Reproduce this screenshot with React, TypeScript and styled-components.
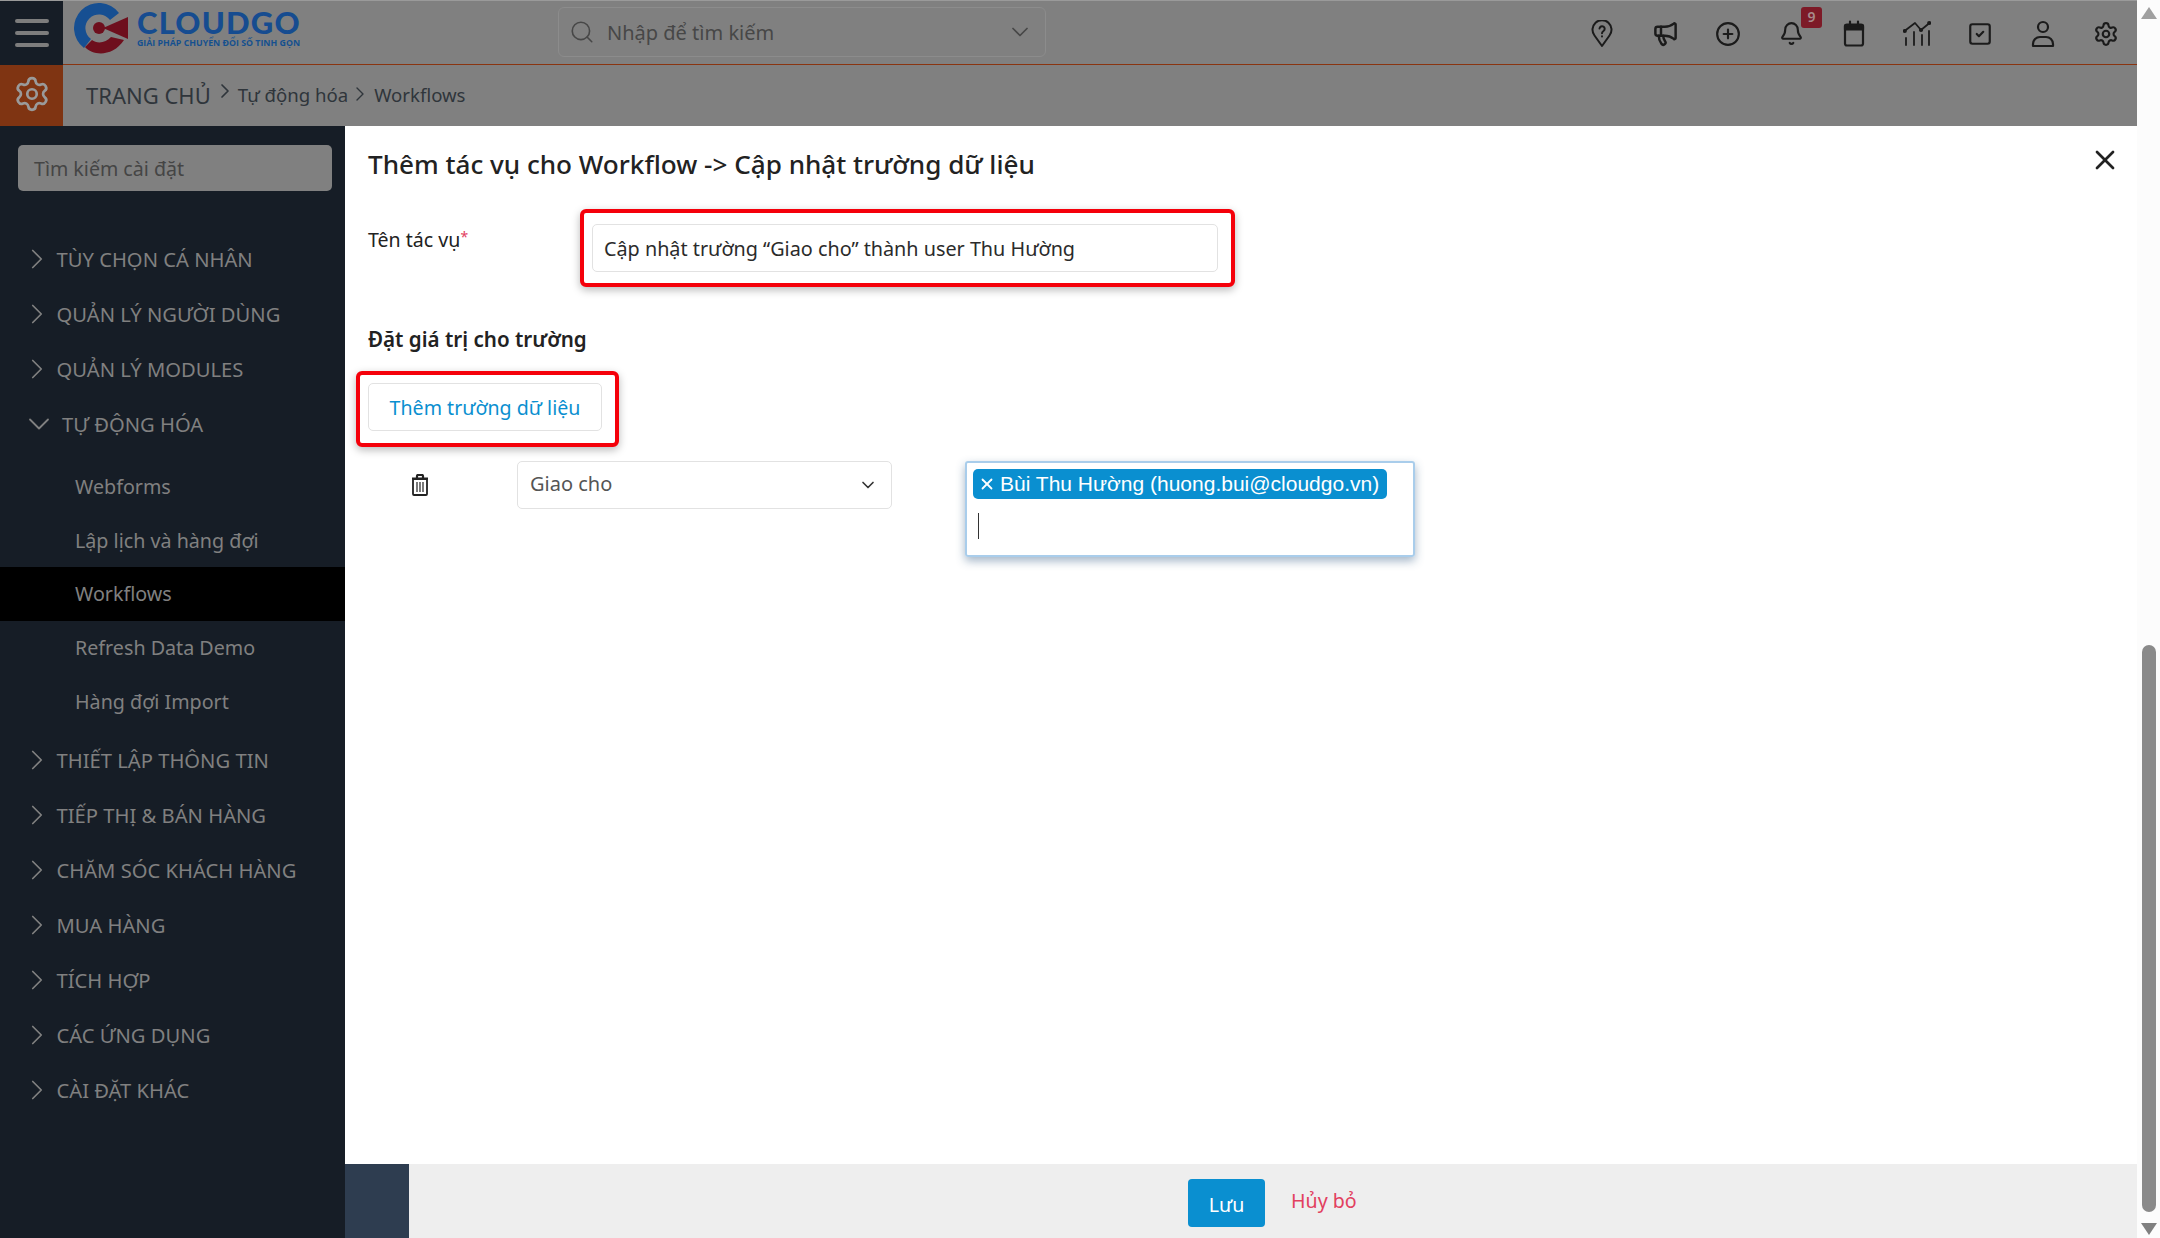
import React from "react";
import styled, { createGlobalStyle } from "styled-components";
import { Bell, ChevronDown, ChevronRight, CirclePlus, Megaphone, Search, Settings, SquareCheck, X } from "lucide-react";

const Global = createGlobalStyle`
  html, body { margin: 0; padding: 0; height: 100%; overflow: hidden; }
  body { font-family: "Noto Sans", "Open Sans", sans-serif; background: #fff; }
  * { box-sizing: border-box; }
`;

const Page = styled.div`
  display: flex;
  width: 2160px;
  height: 1238px;
`;
const Column = styled.div`
  display: flex;
  flex-direction: column;
  width: 2137px;
  height: 100%;
`;
const Header = styled.header`
  display: flex;
  height: 65px;
  flex: none;
  background: #808080;
  border-top: 1px solid #9a9a9a;
  border-bottom: 1px solid #8a3410;
`;
const Burger = styled.div`
  width: 63px;
  flex: none;
  background: #161d26;
  display: flex;
  flex-direction: column;
  justify-content: center;
  align-items: center;
  gap: 8px;
  margin-bottom: -1px;
`;
const BurgerBar = styled.span`
  display: block;
  width: 34px;
  height: 4px;
  border-radius: 2px;
  background: #7d7d7d;
`;
const LogoBox = styled.div`
  width: 495px;
  flex: none;
  display: flex;
  align-items: flex-start;
  padding: 2px 0 0 11px;
  gap: 7px;
`;
const LogoWords = styled.div`
  display: flex;
  flex-direction: column;
`;
const LogoName = styled.div`
  font-family: "Lato", "Open Sans", sans-serif;
  font-weight: 900;
  font-size: 31px;
  line-height: 30px;
  margin-top: 4px;
  letter-spacing: 1.2px;
  color: #164c90;
`;
const LogoTag = styled.div`
  font-family: "Open Sans", sans-serif;
  font-weight: 700;
  font-size: 8.8px;
  line-height: 10px;
  margin-top: 1px;
  color: #15508f;
  white-space: nowrap;
`;
const SearchBox = styled.div`
  width: 488px;
  height: 50px;
  flex: none;
  margin-top: 6px;
  border: 1px solid #8c8c8c;
  border-radius: 6px;
  display: flex;
  align-items: center;
  padding: 0 11px 0 10px;
  gap: 12px;
  color: #474747;
  font-size: 20px;
`;
const Grow = styled.span`
  flex: 1;
  white-space: nowrap;
`;
const IconBar = styled.div`
  margin-left: auto;
  display: flex;
  align-items: center;
  padding-right: 17px;
  gap: 35px;
  padding-top: 2px;
`;
const IconSlot = styled.div`
  position: relative;
  width: 28px;
  height: 28px;
  display: flex;
  align-items: center;
  justify-content: center;
  color: #1b1b1b;
`;
const Badge = styled.span`
  position: absolute;
  left: 24px;
  top: -13px;
  width: 21px;
  height: 21px;
  border-radius: 3px;
  background: #7d1a27;
  color: #a78a8c;
  font-size: 14px;
  font-weight: 600;
  line-height: 20px;
  text-align: center;
`;
const Crumbs = styled.div`
  display: flex;
  height: 61px;
  flex: none;
  background: #808080;
`;
const GearBlock = styled.div`
  width: 63px;
  flex: none;
  background: #7f3412;
  display: flex;
  align-items: center;
  justify-content: center;
  padding-bottom: 3px;
  color: #9a9a9a;
`;
const CrumbTrail = styled.div`
  display: flex;
  align-items: center;
  padding-left: 23px;
  padding-bottom: 3px;
  color: #2f353b;
`;
const CrumbHome = styled.span`
  font-size: 22px;
  padding-top: 2px;
`;
const CrumbText = styled.span`
  font-size: 18.6px;
`;
const CrumbSep = styled.span<{ $l: number; $r: number; $down?: boolean }>`
  display: flex;
  margin: ${(p) => (p.$down ? "0" : "-6px")} ${(p) => p.$r}px 0 ${(p) => p.$l}px;
`;
const Body = styled.div`
  flex: 1;
  display: flex;
  min-height: 0;
`;
const Side = styled.aside`
  width: 345px;
  flex: none;
  background: #161d26;
  padding-top: 19px;
`;
const SideSearch = styled.div`
  margin: 0 13px 0 18px;
  height: 46px;
  background: #808080;
  border-radius: 5px;
  color: #454545;
  font-size: 19.6px;
  line-height: 48px;
  padding-left: 16px;
`;
const Nav = styled.nav`
  margin-top: 40px;
  display: flex;
  flex-direction: column;
`;
const NavHead = styled.div<{ $open?: boolean }>`
  height: 55px;
  display: flex;
  align-items: center;
  font-size: 20.2px;
  color: #808080;
  padding-left: ${(p) => (p.$open ? "21px" : "20px")};
  gap: ${(p) => (p.$open ? "5px" : "2.5px")};
  white-space: nowrap;
`;
const NavSub = styled.div<{ $active?: boolean }>`
  height: 53.6px;
  display: flex;
  align-items: center;
  font-size: 19.7px;
  color: #808080;
  padding-left: 75px;
  background: ${(p) => (p.$active ? "#000" : "transparent")};
`;
const SubGroup = styled.div`
  display: flex;
  flex-direction: column;
  padding: 9px 0 5px;
`;
const Main = styled.main`
  flex: 1;
  display: flex;
  flex-direction: column;
  min-width: 0;
`;
const Content = styled.div`
  flex: 1;
  padding: 21px 16px 0 22px;
  display: flex;
  flex-direction: column;
  align-items: flex-start;
`;
const TitleRow = styled.div`
  display: flex;
  width: 100%;
  justify-content: space-between;
  align-items: flex-start;
`;
const Title = styled.h1`
  margin: 0 0 0 1px;
  font-size: 26.1px;
  line-height: 34px;
  font-weight: 500;
  color: #222;
`;
const Close = styled.div`
  color: #222;
  display: flex;
  margin-top: -3px;
`;
const NameRow = styled.div`
  display: flex;
  margin-top: 28px;
`;
const FieldLabel = styled.label`
  width: 213px;
  padding: 17px 0 0 1px;
  font-size: 19.6px;
  line-height: 28px;
  color: #222;
`;
const Required = styled.span`
  color: #e2405f;
  font-size: 14px;
  vertical-align: top;
  line-height: 22px;
`;
const RedFrame = styled.div<{ $pad: string }>`
  border: 4px solid #f5000a;
  border-radius: 6px;
  padding: ${(p) => p.$pad};
  box-shadow: 0 3px 8px rgba(0, 0, 0, 0.28);
  background: #fff;
`;
const TextBox = styled.div`
  width: 626px;
  height: 48px;
  border: 1px solid #e2e2e2;
  border-radius: 5px;
  padding-left: 11px;
  font-size: 19.8px;
  line-height: 48px;
  color: #2b2b2b;
  white-space: nowrap;
`;
const Section = styled.h2`
  margin: 38px 0 0 1px;
  font-size: 20.6px;
  line-height: 28px;
  font-weight: 600;
  color: #222;
`;
const AddFrameSlot = styled.div`
  margin: 18px 0 14px -11px;
`;
const AddButton = styled.div`
  width: 234px;
  height: 48px;
  border: 1px solid #e2e2e2;
  border-radius: 5px;
  color: #0a8fd0;
  font-size: 19.6px;
  line-height: 48px;
  text-align: center;
  white-space: nowrap;
`;
const FieldRow = styled.div`
  display: flex;
  align-items: flex-start;
`;
const TrashCell = styled.div`
  width: 150px;
  height: 47px;
  padding-left: 43px;
  display: flex;
  align-items: center;
  color: #222;
`;
const SelectBox = styled.div`
  width: 375px;
  height: 48px;
  border: 1px solid #e2e2e2;
  border-radius: 5px;
  padding: 0 13px 4px 12px;
  display: flex;
  align-items: center;
  justify-content: space-between;
  font-size: 20px;
  color: #555;
`;
const MultiBox = styled.div`
  margin-left: 73px;
  width: 450px;
  height: 96px;
  border: 2px solid #a9cdeb;
  border-radius: 3px;
  padding: 6px;
  box-shadow: 0 4px 10px rgba(50, 90, 130, 0.45);
`;
const Chip = styled.div`
  display: inline-flex;
  align-items: center;
  height: 30px;
  width: 414px;
  background: #0a8fd0;
  border-radius: 5px;
  color: #fff;
  font-family: "Liberation Sans", sans-serif;
  font-size: 21px;
  padding-left: 5px;
  gap: 4px;
  white-space: nowrap;
`;
const Caret = styled.div`
  width: 1px;
  height: 26px;
  background: #333;
  margin: 14px 0 0 5px;
`;
const Footer = styled.footer`
  height: 74px;
  flex: none;
  display: flex;
  background: #eee;
`;
const FooterStub = styled.div`
  width: 64px;
  background: #2e3d50;
`;
const FooterActions = styled.div`
  flex: 1;
  display: flex;
  padding: 15px 0 0 779px;
  gap: 26px;
  align-items: flex-start;
`;
const SaveButton = styled.div`
  width: 77px;
  height: 48px;
  background: #0a8fd0;
  border-radius: 4px;
  color: #fff;
  font-size: 19.6px;
  line-height: 52px;
  text-align: center;
`;
const CancelLink = styled.div`
  color: #e2405f;
  font-size: 19.6px;
  line-height: 44px;
`;
const Scroll = styled.div`
  width: 23px;
  flex: none;
  background: #fcfcfc;
  display: flex;
  flex-direction: column;
  align-items: center;
`;
const ArrowUp = styled.div`
  margin-top: 7px;
  width: 0;
  height: 0;
  border-left: 8px solid transparent;
  border-right: 8px solid transparent;
  border-bottom: 12px solid #a0a0a0;
`;
const Thumb = styled.div`
  margin: 626px 0 0 1px;
  width: 14px;
  height: 567px;
  border-radius: 7px;
  background: #8a8a8a;
`;
const ArrowDown = styled.div`
  margin-top: 11px;
  width: 0;
  height: 0;
  border-left: 8px solid transparent;
  border-right: 8px solid transparent;
  border-top: 12px solid #808080;
`;

const CloudLogo = () => (
  <svg width="56" height="52" viewBox="0 0 56 52">
    <path d="M45 10A25 25 0 1 0 10 45L17 36A13.600 13.600 0 1 1 36 17Z" fill="#164f92" />
    <path d="M54 14V36L29 25Z" fill="#6e0f1d" />
    <circle cx="25" cy="25" r="6" fill="#6e0f1d" />
    <path d="M11 44C19 53 39 54 50 37L37 34C32 40 23 41 18 37Z" fill="#6e0f1d" />
  </svg>
);
const PinHelp = () => (
  <svg width="26" height="28" viewBox="0 0 26 28" fill="none" stroke="currentColor" strokeWidth="2" strokeLinecap="round" strokeLinejoin="round">
    <path d="M13 26 L5.500 15.500A9.500 9.500 0 1 1 20.500 15.500Z" />
    <path d="M10.500 8.500A2.600 2.600 0 1 1 14.500 11C13.500 11.700 13 12.200 13 13.300" />
    <path d="M13 16.300v.1" />
  </svg>
);
const CalendarIcon = () => (
  <svg width="26" height="28" viewBox="0 0 26 28" fill="none" stroke="currentColor" strokeWidth="2.2" strokeLinecap="round" strokeLinejoin="round">
    <rect x="4" y="4.500" width="18" height="21" rx="2" />
    <path d="M4 5.500h18v4H4z" fill="currentColor" />
    <path d="M9 1.500v3M17 1.500v3" />
  </svg>
);
const ChartIcon = () => (
  <svg width="28" height="28" viewBox="0 0 28 28" fill="none" stroke="currentColor" strokeWidth="1.800" strokeLinecap="round" strokeLinejoin="round">
    <path d="M1.500 11L12 3L18 10L26.500 3" />
    <circle cx="1.800" cy="11" r="1.200" fill="currentColor" />
    <circle cx="18" cy="10" r="1.200" fill="currentColor" />
    <circle cx="26.200" cy="3" r="1.200" fill="currentColor" />
    <path d="M3 18v7M11 12v13M19 15v10M26 11v14" />
  </svg>
);
const UserIcon = () => (
  <svg width="26" height="28" viewBox="0 0 26 28" fill="none" stroke="currentColor" strokeWidth="2.2" strokeLinecap="round" strokeLinejoin="round">
    <circle cx="13" cy="7" r="5" />
    <path d="M3 26v-2a7 7 0 0 1 7-7h6a7 7 0 0 1 7 7v2z" />
  </svg>
);
const TrashIcon = () => (
  <svg width="20" height="22" viewBox="0 0 20 22" fill="none" stroke="currentColor" strokeWidth="1.800" strokeLinejoin="round">
    <path d="M3 5h14v15a1 1 0 0 1-1 1H4a1 1 0 0 1-1-1z" />
    <path d="M2 4.500h16M7 4V2a1 1 0 0 1 1-1h4a1 1 0 0 1 1 1v2" strokeWidth="2.200" />
    <path d="M7 8v10M10 8v10M13 8v10" strokeWidth="1.200" />
  </svg>
);

const heads1 = ["TÙY CHỌN CÁ NHÂN", "QUẢN LÝ NGƯỜI DÙNG", "QUẢN LÝ MODULES"];
const subs = ["Webforms", "Lập lịch và hàng đợi", "Workflows", "Refresh Data Demo", "Hàng đợi Import"];
const heads2 = ["THIẾT LẬP THÔNG TIN", "TIẾP THỊ & BÁN HÀNG", "CHĂM SÓC KHÁCH HÀNG", "MUA HÀNG", "TÍCH HỢP", "CÁC ỨNG DỤNG", "CÀI ĐẶT KHÁC"];

const Closed = ({ label }: { label: string }) => (
  <NavHead>
    <ChevronRight size={34} strokeWidth={1.2} />
    {label}
  </NavHead>
);

export default function App() {
  return (
    <Page>
      <Global />
      <Column>
        <Header>
          <Burger>
            <BurgerBar />
            <BurgerBar />
            <BurgerBar />
          </Burger>
          <LogoBox>
            <CloudLogo />
            <LogoWords>
              <LogoName>CLOUDGO</LogoName>
              <LogoTag>GIẢI PHÁP CHUYỂN ĐỔI SỐ TINH GỌN</LogoTag>
            </LogoWords>
          </LogoBox>
          <SearchBox>
            <Search size={26} strokeWidth={1.5} />
            <Grow>Nhập để tìm kiếm</Grow>
            <ChevronDown size={28} strokeWidth={1.5} />
          </SearchBox>
          <IconBar>
            <IconSlot><PinHelp /></IconSlot>
            <IconSlot><Megaphone size={27} strokeWidth={2.2} /></IconSlot>
            <IconSlot><CirclePlus size={26} strokeWidth={2} /></IconSlot>
            <IconSlot>
              <Bell size={25} strokeWidth={2} />
              <Badge>9</Badge>
            </IconSlot>
            <IconSlot><CalendarIcon /></IconSlot>
            <IconSlot><ChartIcon /></IconSlot>
            <IconSlot><SquareCheck size={26} strokeWidth={2} /></IconSlot>
            <IconSlot><UserIcon /></IconSlot>
            <IconSlot><Settings size={26} strokeWidth={2} /></IconSlot>
          </IconBar>
        </Header>
        <Crumbs>
          <GearBlock><Settings size={38} strokeWidth={1.7} /></GearBlock>
          <CrumbTrail>
            <CrumbHome>TRANG CHỦ</CrumbHome>
            <CrumbSep $l={2} $r={1}><ChevronRight size={24} strokeWidth={1.7} /></CrumbSep>
            <CrumbText>Tự động hóa</CrumbText>
            <CrumbSep $l={0} $r={2} $down><ChevronRight size={24} strokeWidth={1.4} /></CrumbSep>
            <CrumbText>Workflows</CrumbText>
          </CrumbTrail>
        </Crumbs>
        <Body>
          <Side>
            <SideSearch>Tìm kiếm cài đặt</SideSearch>
            <Nav>
              {heads1.map((h) => <Closed key={h} label={h} />)}
              <NavHead $open>
                <ChevronDown size={36} strokeWidth={1.2} />
                TỰ ĐỘNG HÓA
              </NavHead>
              <SubGroup>
                {subs.map((s) => <NavSub key={s} $active={s === "Workflows"}>{s}</NavSub>)}
              </SubGroup>
              {heads2.map((h) => <Closed key={h} label={h} />)}
            </Nav>
          </Side>
          <Main>
            <Content>
              <TitleRow>
                <Title>Thêm tác vụ cho Workflow -&gt; Cập nhật trường dữ liệu</Title>
                <Close><X size={32} strokeWidth={2} /></Close>
              </TitleRow>
              <NameRow>
                <FieldLabel>Tên tác vụ<Required>*</Required></FieldLabel>
                <RedFrame $pad="11px 13px 11px 8px">
                  <TextBox>Cập nhật trường “Giao cho” thành user Thu Hường</TextBox>
                </RedFrame>
              </NameRow>
              <Section>Đặt giá trị cho trường</Section>
              <AddFrameSlot>
                <RedFrame $pad="8px 13px 12px 8px">
                  <AddButton>Thêm trường dữ liệu</AddButton>
                </RedFrame>
              </AddFrameSlot>
              <FieldRow>
                <TrashCell><TrashIcon /></TrashCell>
                <SelectBox>
                  Giao cho
                  <ChevronDown size={20} strokeWidth={2} color="#333" style={{ marginTop: 4 }} />
                </SelectBox>
                <MultiBox>
                  <Chip>
                    <X size={18} strokeWidth={2.4} />
                    Bùi Thu Hường (huong.bui@cloudgo.vn)
                  </Chip>
                  <Caret />
                </MultiBox>
              </FieldRow>
            </Content>
            <Footer>
              <FooterStub />
              <FooterActions>
                <SaveButton>Lưu</SaveButton>
                <CancelLink>Hủy bỏ</CancelLink>
              </FooterActions>
            </Footer>
          </Main>
        </Body>
      </Column>
      <Scroll>
        <ArrowUp />
        <Thumb />
        <ArrowDown />
      </Scroll>
    </Page>
  );
}
